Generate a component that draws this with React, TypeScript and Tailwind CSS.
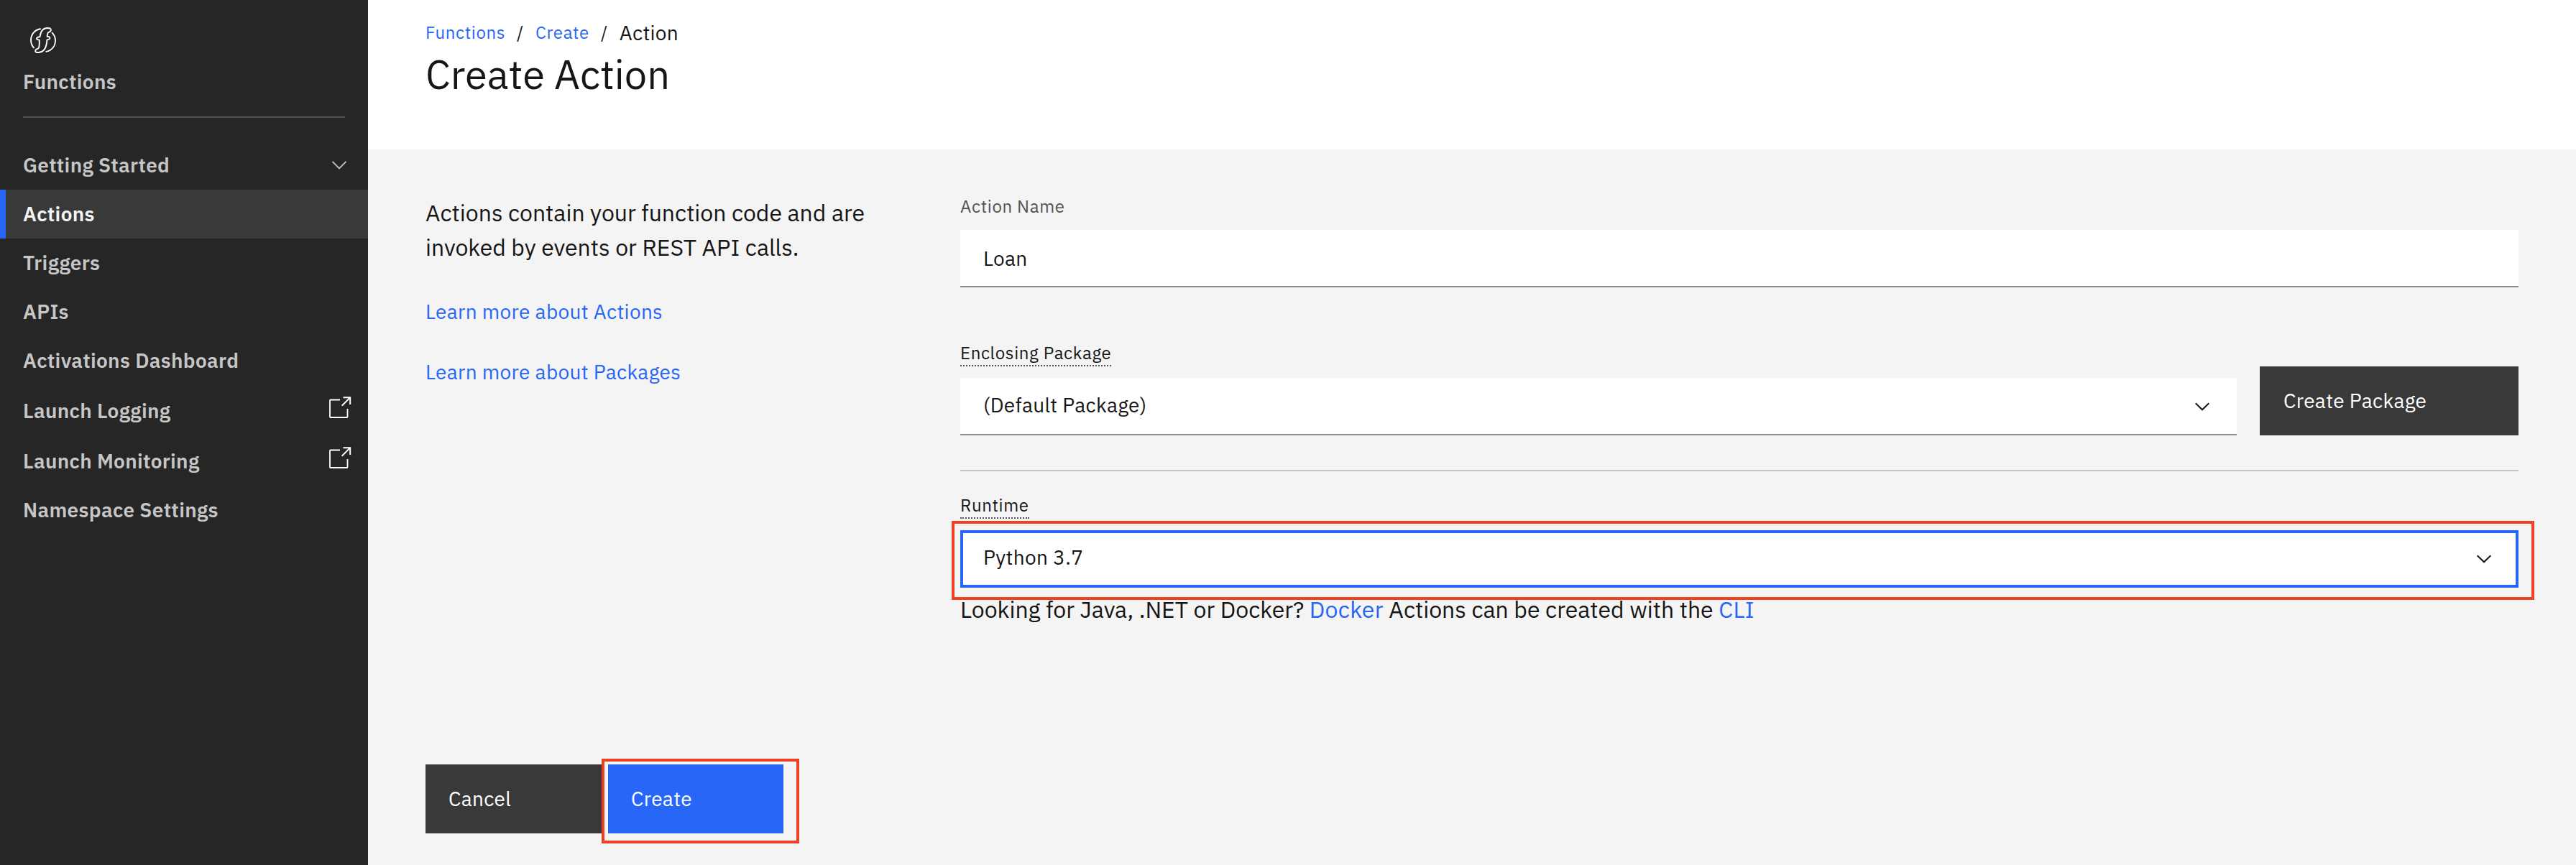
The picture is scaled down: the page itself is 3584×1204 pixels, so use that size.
import type { ReactNode } from "react";

function FunctionsLogo() {
  return (
    <svg className="ml-1 block size-12" viewBox="0 0 48 48" fill="none" stroke="#ffffff" strokeWidth="1.9" strokeLinejoin="round" strokeLinecap="round">
      <path d="M20 8.3C12 9.6 7 16 7 24c0 3.8 1.4 7.600 4 10.400" />
      <path d="M36.500 13.600C39.500 16.500 41 20 41 24.200c0 8-5 13.800-12.800 15.700" />
      <path d="M19.500 19.200C20.500 12 24 7 30 7C33.500 7 35.200 7.600 34.800 10.200C34.600 12.400 32 12 30.800 13.600C30 15 29.800 17 29.600 18.800C32 19 33.600 19.400 33.400 21.200C33 23 31 22.800 29.400 23.600C29 32 26 40.500 17.500 41C14.500 41.200 13 40.600 13.200 38.400C13.600 36 16 37 17.600 35C19.200 32 18.800 27 18.800 23.800C16.600 23.600 15 23.400 15 21.600C15 19.800 17 19.600 19.500 19.200Z" />
    </svg>
  );
}

function LaunchIcon() {
  return (
    <svg className="-mt-2.5 size-[34px]" viewBox="0 0 34 34" fill="none" stroke="#ffffff" strokeWidth="2">
      <path d="M17 6.500H4a1 1 0 0 0-1 1V30a1 1 0 0 0 1 1h22.500a1 1 0 0 0 1-1V19" strokeWidth="1.8" />
      <path d="M21.500 3.200H31.200V13M31 3.400L19.700 14.700" />
    </svg>
  );
}

function SelectChevron({ className }: { className: string }) {
  return (
    <svg className={`h-3 w-[22px] ${className}`} viewBox="0 0 22 12" fill="none" stroke="#161616" strokeWidth="2">
      <path d="M1.700 1.200L11 10.300L20.300 1.200" />
    </svg>
  );
}

type NavItem = { label: string; icon?: "chevron" | "launch"; active?: boolean };

const navItems: NavItem[] = [
  { label: "Getting Started", icon: "chevron" },
  { label: "Actions", active: true },
  { label: "Triggers" },
  { label: "APIs" },
  { label: "Activations Dashboard" },
  { label: "Launch Logging", icon: "launch" },
  { label: "Launch Monitoring", icon: "launch" },
  { label: "Namespace Settings" },
];

function Sidebar() {
  return (
    <aside className="w-[512px] shrink-0 bg-[#262626] pt-8 text-[28px] font-semibold tracking-[0.32px] text-[#c6c6c6]">
      <div className="px-8">
        <FunctionsLogo />
        <div className="mt-4 leading-9">Functions</div>
        <div className="mt-[30px] h-0.5 bg-[#525252]" />
      </div>
      <nav className="mt-8">
        {navItems.map((item) => (
          <a
            key={item.label}
            className={`flex items-center justify-between border-l-8 pr-[22px] pl-6 leading-9 ${
              item.active ? "border-[#2766f6] bg-[#393939] text-[#f4f4f4]" : "border-transparent"
            } ${item.icon === "launch" ? "h-[70px] pt-0.5" : "h-[68px]"}`}
          >
            <span>{item.label}</span>
            {item.icon === "launch" && <LaunchIcon />}
            {item.icon === "chevron" && (
              <svg className="mr-[7px] h-3 w-[22px]" viewBox="0 0 22 12" fill="none" stroke="#c6c6c6" strokeWidth="1.8">
                <path d="M1.500 0.900L11 10.400L20.500 0.900" />
              </svg>
            )}
          </a>
        ))}
      </nav>
    </aside>
  );
}

function Select({ children, focused }: { children: ReactNode; focused?: boolean }) {
  return (
    <div
      className={`flex h-20 items-center justify-between bg-white text-[28px] leading-9 tracking-[0.32px] ${
        focused ? "border-4 border-[#2766f6] pr-[33px] pl-7" : "border-b-2 border-[#8d8d8d] pr-[37px] pl-8"
      }`}
    >
      <span className={focused ? "mb-[5px]" : "mb-[3px]"}>{children}</span>
      <SelectChevron className={focused ? "mt-0" : "mt-0.5"} />
    </div>
  );
}

export default function App() {
  return (
    <div className="flex h-[1204px] w-[3584px] overflow-hidden bg-[#f4f4f4] font-['IBM_Plex_Sans',Roboto,sans-serif] text-[#161616]">
      <Sidebar />
      <main className="flex flex-1 flex-col">
        <header className="h-52 bg-white pt-[30px] pl-20">
          <div className="flex h-8 items-start gap-4 text-2xl leading-[30px] tracking-[0.64px]">
            <a className="text-[#2766f6]">Functions</a>
            <span>/</span>
            <a className="text-[#2766f6]">Create</a>
            <span>/</span>
            <span className="text-[28px] leading-8 tracking-[0.32px]">Action</span>
          </div>
          <h1 className="mt-[9px] text-[56px] leading-[64px]">Create Action</h1>
        </header>

        <div className="flex pt-16 pr-20 pl-20">
          <section className="w-[744px] shrink-0">
            <p className="text-[32px] leading-[48px]">
              Actions contain your function code and are
              <br />
              invoked by events or REST API calls.
            </p>
            <a className="mt-[46px] block text-[28px] leading-10 tracking-[0.32px] text-[#2766f6]">Learn more about Actions</a>
            <a className="mt-11 block text-[28px] leading-10 tracking-[0.32px] text-[#2766f6]">Learn more about Packages</a>
          </section>

          <section className="flex-1">
            <div className="text-2xl leading-[30px] tracking-[0.64px] text-[#525252]">Action Name</div>
            <div className="mt-[18px] flex h-20 items-center border-b-2 border-[#8d8d8d] bg-white pt-px pl-8 text-[28px] leading-9 tracking-[0.32px]">
              Loan
            </div>

            <div className="mt-[76px] flex items-end gap-8">
              <div className="flex-1">
                <div className="w-[210px] border-b-2 border-dotted border-[#525252] pb-0.5 text-2xl leading-[30px] tracking-[0.64px] whitespace-nowrap">
                  Enclosing Package
                </div>
                <div className="mt-4">
                  <Select>(Default Package)</Select>
                </div>
              </div>
              <button className="h-24 w-[360px] bg-[#393939] pl-[33px] text-left text-[28px] leading-9 tracking-[0.32px] text-white">
                Create Package
              </button>
            </div>

            <div className="mt-12 h-0.5 bg-[#c6c6c6]" />

            <div className="mt-8 w-24 border-b-2 border-dotted border-[#525252] pb-0.5 text-2xl leading-[30px] tracking-[0.64px]">
              Runtime
            </div>
            <div className="relative mt-4">
              <Select focused>Python 3.7</Select>
              <div className="absolute -top-[13px] -right-[22px] -bottom-[17px] -left-3 border-4 border-[#ee4024]" />
            </div>
            <p className="mt-1.5 text-[32px] leading-[48px]">
              Looking for Java, .NET or Docker? <a className="tracking-[0.32px] text-[#2766f6]">Docker</a> Actions can be created with the{" "}
              <a className="tracking-[0.32px] text-[#2766f6]">CLI</a>
            </p>
          </section>
        </div>

        <div className="mt-auto flex gap-2 pb-11 pl-20 text-[28px] leading-9 text-white">
          <button className="h-24 w-[246px] bg-[#393939] pl-8 text-left tracking-[0.32px]">Cancel</button>
          <div className="relative">
            <button className="block h-24 w-[244px] bg-[#2766f6] pl-8 text-left tracking-[0.32px]">Create</button>
            <div className="absolute -top-2 -right-[22px] -bottom-3.5 -left-[9px] border-4 border-[#ee4024]" />
          </div>
        </div>
      </main>
    </div>
  );
}
